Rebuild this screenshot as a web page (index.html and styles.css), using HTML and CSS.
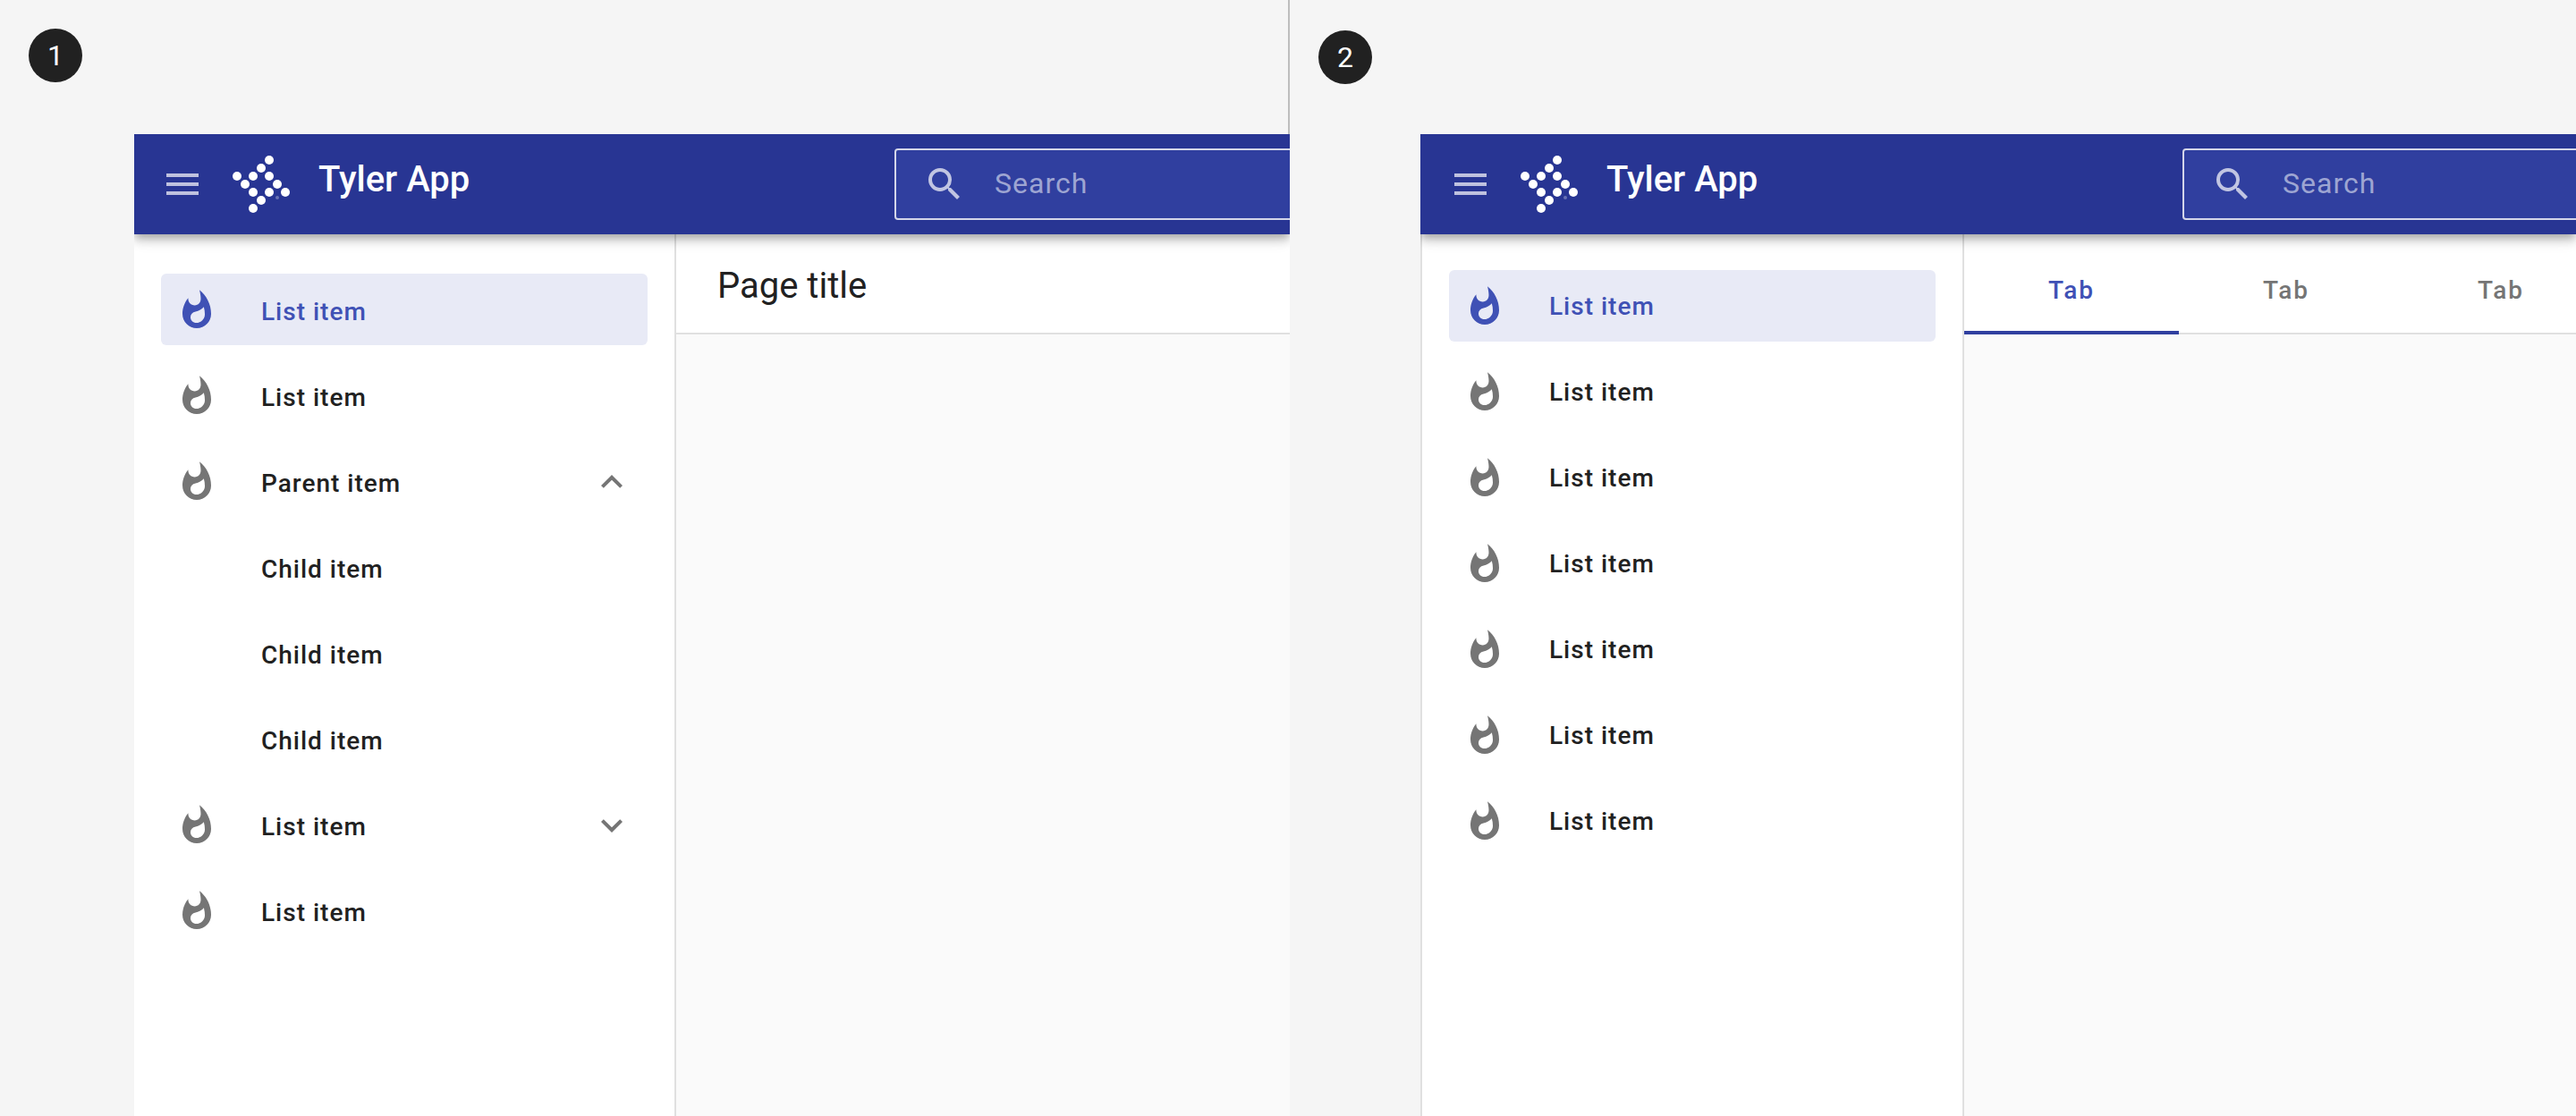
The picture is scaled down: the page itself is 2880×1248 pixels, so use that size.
FILE: index.html
```html
<!DOCTYPE html>
<html lang="en">
<head>
<meta charset="utf-8">
<title>Tyler App navigation</title>
<link rel="stylesheet" href="styles.css">
</head>
<body>
<svg class="sprite" aria-hidden="true">
  <symbol id="menu" viewBox="0 0 24 24"><path d="M3 18h18v-2H3v2zm0-5h18v-2H3v2zm0-7v2h18V6H3z"/></symbol>
  <symbol id="search" viewBox="0 0 24 24"><path d="M15.5 14h-.79l-.28-.27A6.471 6.471 0 0 0 16 9.5 6.5 6.5 0 1 0 9.5 16c1.61 0 3.09-.59 4.23-1.57l.27.28v.79l5 4.99L20.49 19l-4.99-5zm-6 0C7.01 14 5 11.99 5 9.5S7.01 5 9.5 5 14 7.01 14 9.5 11.99 14 9.5 14z"/></symbol>
  <symbol id="flame" viewBox="0 0 24 24"><path d="M13.5.67s.74 2.65.74 4.8c0 2.06-1.35 3.73-3.41 3.73-2.07 0-3.63-1.67-3.63-3.73l.03-.36C5.21 7.51 4 10.62 4 14c0 4.42 3.58 8 8 8s8-3.58 8-8C20 8.61 17.41 3.8 13.5.67zM11.71 19c-1.78 0-3.22-1.4-3.22-3.14 0-1.62 1.05-2.76 2.81-3.12 1.77-.36 3.6-1.21 4.62-2.58.39 1.29.59 2.65.59 4.04 0 2.65-2.15 4.8-4.8 4.8z"/></symbol>
  <symbol id="up" viewBox="0 0 24 24"><path d="M7.41 15.41L12 10.83l4.59 4.58L18 14l-6-6-6 6z"/></symbol>
  <symbol id="down" viewBox="0 0 24 24"><path d="M7.41 8.58L12 13.17l4.59-4.59L18 10l-6 6-6-6z"/></symbol>
  <symbol id="logo" viewBox="0 0 64 64">
    <circle cx="41" cy="5" r="5"/><circle cx="32" cy="14" r="5"/>
    <circle cx="5" cy="23" r="5"/><circle cx="23" cy="23" r="5"/><circle cx="41" cy="23" r="5"/>
    <circle cx="14" cy="32" r="5"/><circle cx="50" cy="32" r="5"/>
    <circle cx="23" cy="41" r="5"/><circle cx="41" cy="41" r="5"/><circle cx="59" cy="41" r="5"/>
    <circle cx="32" cy="50" r="5"/><circle cx="23" cy="59" r="5"/>
    <circle cx="50" cy="47" r="2" opacity=".3"/>
  </symbol>
</svg>
<main class="board">
  <section class="pane pane-first">
    <span class="badge">1</span>
    <div class="app">
      <header class="bar">
        <button class="menu" aria-label="Menu"><svg class="icon"><use href="#menu"/></svg></button>
        <svg class="logo"><use href="#logo"/></svg>
        <h1 class="brand">Tyler App</h1>
        <label class="search"><svg class="icon"><use href="#search"/></svg><input class="field" type="search" placeholder="Search" aria-label="Search"></label>
      </header>
      <div class="body">
        <nav class="side">
          <a class="item active" href="#"><svg class="icon"><use href="#flame"/></svg><span class="text">List item</span></a>
          <a class="item" href="#"><svg class="icon"><use href="#flame"/></svg><span class="text">List item</span></a>
          <button class="item" aria-expanded="true"><svg class="icon"><use href="#flame"/></svg><span class="text">Parent item</span><svg class="icon"><use href="#up"/></svg></button>
          <a class="item child" href="#"><span class="text">Child item</span></a>
          <a class="item child" href="#"><span class="text">Child item</span></a>
          <a class="item child" href="#"><span class="text">Child item</span></a>
          <button class="item" aria-expanded="false"><svg class="icon"><use href="#flame"/></svg><span class="text">List item</span><svg class="icon"><use href="#down"/></svg></button>
          <a class="item" href="#"><svg class="icon"><use href="#flame"/></svg><span class="text">List item</span></a>
        </nav>
        <div class="content">
          <h2 class="page-title">Page title</h2>
        </div>
      </div>
    </div>
  </section>
  <section class="pane pane-second">
    <span class="badge">2</span>
    <div class="app">
      <header class="bar">
        <button class="menu" aria-label="Menu"><svg class="icon"><use href="#menu"/></svg></button>
        <svg class="logo"><use href="#logo"/></svg>
        <h1 class="brand">Tyler App</h1>
        <label class="search"><svg class="icon"><use href="#search"/></svg><input class="field" type="search" placeholder="Search" aria-label="Search"></label>
      </header>
      <div class="body">
        <nav class="side">
          <a class="item active" href="#"><svg class="icon"><use href="#flame"/></svg><span class="text">List item</span></a>
          <a class="item" href="#"><svg class="icon"><use href="#flame"/></svg><span class="text">List item</span></a>
          <a class="item" href="#"><svg class="icon"><use href="#flame"/></svg><span class="text">List item</span></a>
          <a class="item" href="#"><svg class="icon"><use href="#flame"/></svg><span class="text">List item</span></a>
          <a class="item" href="#"><svg class="icon"><use href="#flame"/></svg><span class="text">List item</span></a>
          <a class="item" href="#"><svg class="icon"><use href="#flame"/></svg><span class="text">List item</span></a>
          <a class="item" href="#"><svg class="icon"><use href="#flame"/></svg><span class="text">List item</span></a>
        </nav>
        <div class="content">
          <div class="tabs" role="tablist">
            <button class="tab selected" role="tab" aria-selected="true">Tab</button>
            <button class="tab" role="tab" aria-selected="false">Tab</button>
            <button class="tab" role="tab" aria-selected="false">Tab</button>
          </div>
        </div>
      </div>
    </div>
  </section>
</main>
</body>
</html>
```
FILE: styles.css
```css
* { box-sizing: border-box; }

body {
  margin: 0;
  background: #f5f5f5;
  color: #212121;
  font-family: Roboto, "Liberation Sans", sans-serif;
}

button, input { font: inherit; color: inherit; }
button { background: none; border: 0; padding: 0; text-align: left; }
.sprite { display: none; }

.board {
  display: grid;
  grid-template-columns: calc(50% + 2px) minmax(0, 1fr);
  min-height: 100vh;
}

.pane {
  position: relative;
  display: flex;
  padding-top: 150px;
}
.pane-first { padding-left: 150px; border-right: 2px solid #bdbdbd; }
.pane-second { padding-left: 146px; }

.badge {
  position: absolute;
  top: 32px;
  left: 32px;
  width: 60px;
  height: 60px;
  border-radius: 50%;
  background: #212121;
  color: #fff;
  font-size: 32px;
  line-height: 60px;
  text-align: center;
}
.pane-second .badge { top: 34px; }

.app {
  flex: 1;
  min-width: 0;
  display: flex;
  flex-direction: column;
  overflow: hidden;
}
/* the first window covers the divider beside it */
.pane-first .app { margin-right: -2px; }

.bar {
  position: relative;
  z-index: 1;
  flex: none;
  display: flex;
  align-items: center;
  height: 112px;
  padding-left: 30px;
  background: #283593;
  color: #fff;
  box-shadow: 0 4px 8px -2px rgba(0, 0, 0, .2), 0 8px 10px rgba(0, 0, 0, .14), 0 2px 20px rgba(0, 0, 0, .12);
}
.pane-second .bar { padding-left: 32px; }

.icon { flex: none; display: block; width: 48px; height: 48px; fill: currentColor; }
.menu { color: rgba(255, 255, 255, .7); }
.logo { flex: none; width: 64px; height: 64px; margin-left: 32px; fill: #fff; }

.brand {
  flex: none;
  width: 644px;
  margin: 0;
  padding: 0 0 10px 32px;
  font-size: 40px;
  font-weight: 500;
  line-height: 48px;
}

.search {
  flex: 1;
  min-width: 0;
  display: flex;
  align-items: center;
  gap: 32px;
  height: 80px;
  margin-left: 32px;
  padding-left: 30px;
  border: 2px solid rgba(255, 255, 255, .8);
  border-right: 0;
  border-radius: 4px 0 0 4px;
  background: #303f9f;
  background-clip: padding-box;
  color: rgba(255, 255, 255, .7);
}
.field {
  flex: 1;
  min-width: 0;
  padding: 0 0 2px;
  border: 0;
  outline: 0;
  background: none;
  font-size: 32px;
  line-height: 40px;
  letter-spacing: 1px;
}
.field::placeholder { color: rgba(255, 255, 255, .54); opacity: 1; }

.body { flex: 1; display: flex; }

.side {
  flex: none;
  display: flex;
  flex-direction: column;
  gap: 16px;
  width: 606px;
  padding: 44px 30px;
  border-right: 2px solid #e0e0e0;
  background: #fff;
}
.pane-second .side { width: 608px; padding-top: 40px; border-left: 2px solid #e0e0e0; }

.item {
  display: flex;
  align-items: center;
  gap: 48px;
  width: 100%;
  height: 80px;
  padding: 2px 16px 0;
  border-radius: 6px;
  color: #757575;
  font-size: 28px;
  font-weight: 500;
  line-height: 40px;
  letter-spacing: 1px;
  text-decoration: none;
}
.text { flex: 1; color: #212121; }
.pane-first .text { padding-top: 4px; }
.child { padding-left: 112px; }
.active { background: #e8eaf6; color: #3f51b5; }
.active .text { color: inherit; }

.content { flex: 1; min-width: 0; background: #fafafa; overflow: hidden; }

.page-title {
  height: 112px;
  margin: 0;
  padding: 34px 46px 0;
  border-bottom: 2px solid #e0e0e0;
  background: #fff;
  font-size: 40px;
  font-weight: 400;
  line-height: 48px;
}

.tabs {
  display: flex;
  height: 112px;
  background: #fff;
  box-shadow: inset 0 -2px #e0e0e0;
}
.tab {
  flex: none;
  width: 240px;
  padding-top: 14px;
  color: #757575;
  font-size: 28px;
  font-weight: 500;
  line-height: 40px;
  letter-spacing: 2px;
  text-align: center;
}
.selected { color: #3f51b5; box-shadow: inset 0 -4px #303f9f; }
```
